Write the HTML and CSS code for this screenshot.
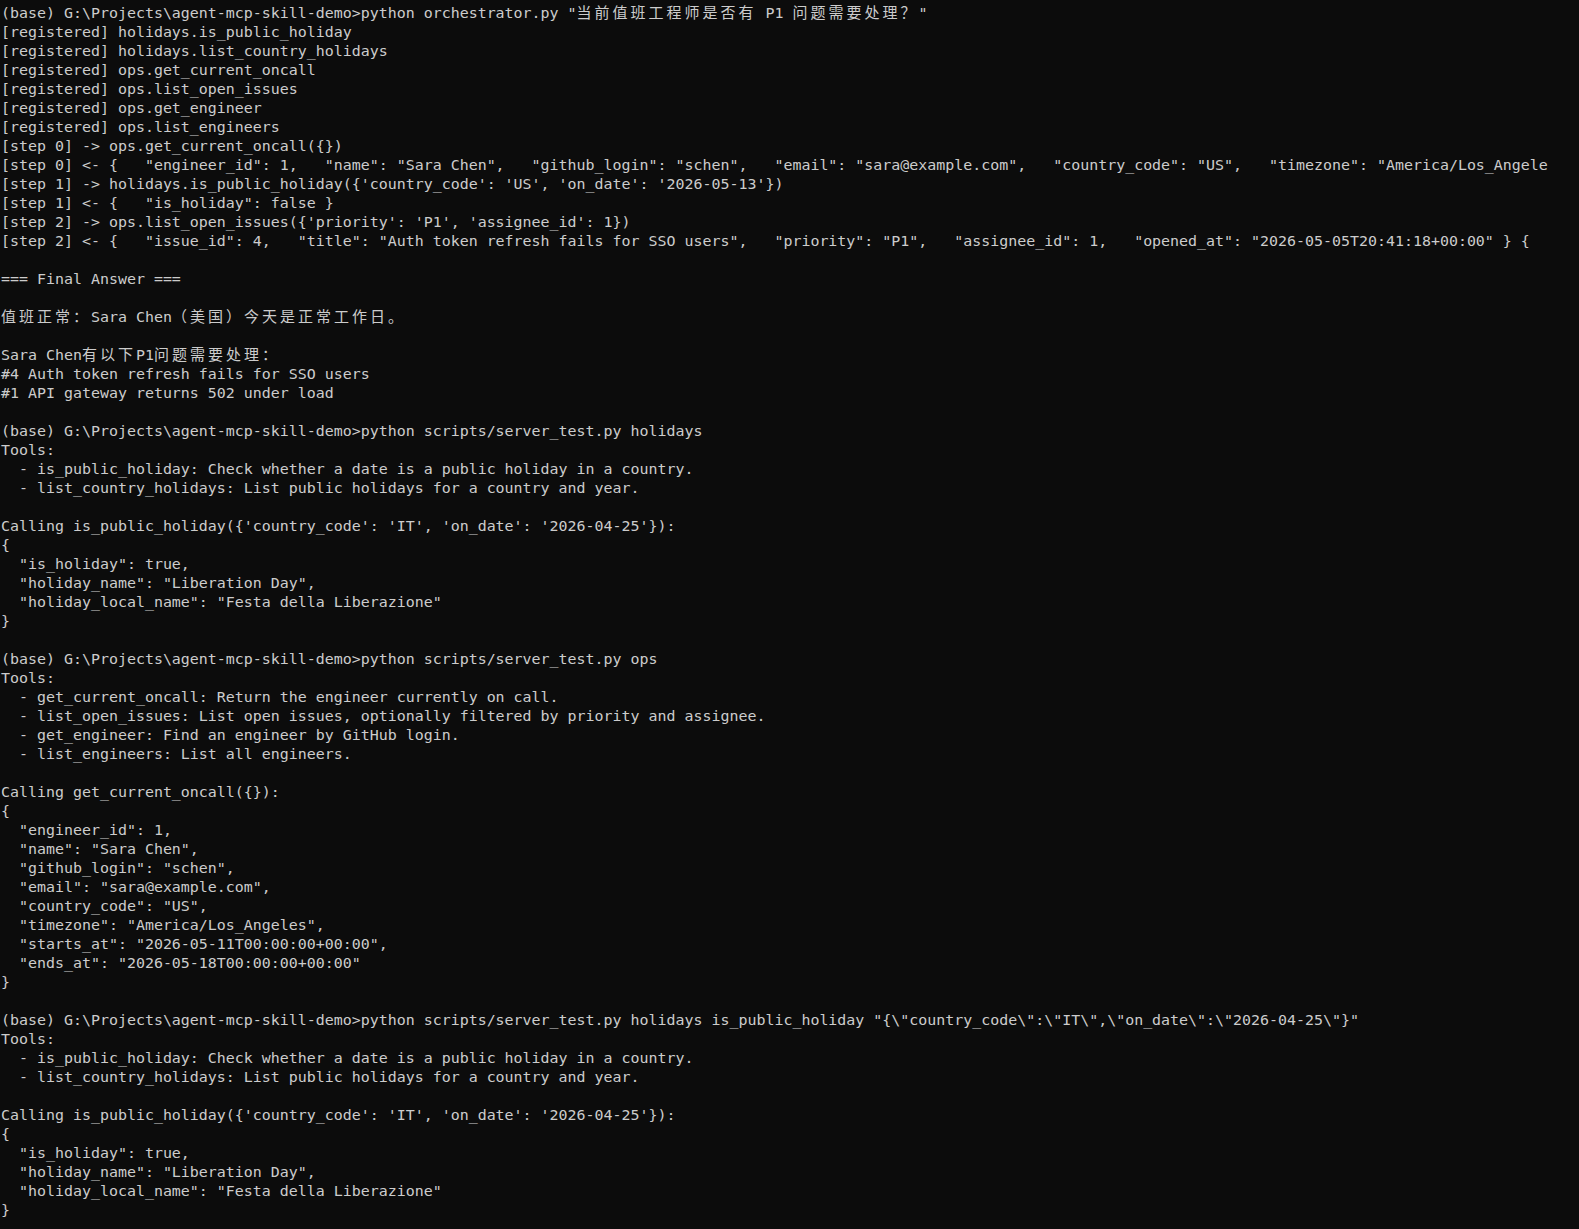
FILE: index.html
```html
<!DOCTYPE html>
<html lang="zh-CN">
<head>
<meta charset="utf-8">
<title>Terminal</title>
<link rel="stylesheet" href="styles.css">
</head>
<body>
<main class="terminal">
<pre class="output">(base) G:\Projects\agent-mcp-skill-demo&gt;python orchestrator.py "<span class="cjk">当前值班工程师是否有</span> P1 <span class="cjk">问题需要处理？</span>"
[registered] holidays.is_public_holiday
[registered] holidays.list_country_holidays
[registered] ops.get_current_oncall
[registered] ops.list_open_issues
[registered] ops.get_engineer
[registered] ops.list_engineers
[step 0] -&gt; ops.get_current_oncall({})
[step 0] &lt;- {   "engineer_id": 1,   "name": "Sara Chen",   "github_login": "schen",   "email": "sara@example.com",   "country_code": "US",   "timezone": "America/Los_Angele
[step 1] -&gt; holidays.is_public_holiday({'country_code': 'US', 'on_date': '2026-05-13'})
[step 1] &lt;- {   "is_holiday": false }
[step 2] -&gt; ops.list_open_issues({'priority': 'P1', 'assignee_id': 1})
[step 2] &lt;- {   "issue_id": 4,   "title": "Auth token refresh fails for SSO users",   "priority": "P1",   "assignee_id": 1,   "opened_at": "2026-05-05T20:41:18+00:00" } {

=== Final Answer ===

<span class="cjk">值班正常：</span>Sara Chen<span class="cjk">（美国）今天是正常工作日。</span>

Sara Chen<span class="cjk">有以下</span>P1<span class="cjk">问题需要处理：</span>
#4 Auth token refresh fails for SSO users
#1 API gateway returns 502 under load

(base) G:\Projects\agent-mcp-skill-demo&gt;python scripts/server_test.py holidays
Tools:
  - is_public_holiday: Check whether a date is a public holiday in a country.
  - list_country_holidays: List public holidays for a country and year.

Calling is_public_holiday({'country_code': 'IT', 'on_date': '2026-04-25'}):
{
  "is_holiday": true,
  "holiday_name": "Liberation Day",
  "holiday_local_name": "Festa della Liberazione"
}

(base) G:\Projects\agent-mcp-skill-demo&gt;python scripts/server_test.py ops
Tools:
  - get_current_oncall: Return the engineer currently on call.
  - list_open_issues: List open issues, optionally filtered by priority and assignee.
  - get_engineer: Find an engineer by GitHub login.
  - list_engineers: List all engineers.

Calling get_current_oncall({}):
{
  "engineer_id": 1,
  "name": "Sara Chen",
  "github_login": "schen",
  "email": "sara@example.com",
  "country_code": "US",
  "timezone": "America/Los_Angeles",
  "starts_at": "2026-05-11T00:00:00+00:00",
  "ends_at": "2026-05-18T00:00:00+00:00"
}

(base) G:\Projects\agent-mcp-skill-demo&gt;python scripts/server_test.py holidays is_public_holiday "{\"country_code\":\"IT\",\"on_date\":\"2026-04-25\"}"
Tools:
  - is_public_holiday: Check whether a date is a public holiday in a country.
  - list_country_holidays: List public holidays for a country and year.

Calling is_public_holiday({'country_code': 'IT', 'on_date': '2026-04-25'}):
{
  "is_holiday": true,
  "holiday_name": "Liberation Day",
  "holiday_local_name": "Festa della Liberazione"
}</pre>
</main>
</body>
</html>
```

FILE: styles.css
```css
html, body {
  margin: 0;
  padding: 0;
  background: #0c0c0c;
  height: 100%;
  overflow: hidden;
}

.terminal {
  background: #0c0c0c;
  color: #cccccc;
  min-height: 100%;
  padding: 4px 0 0 1px;
  box-sizing: border-box;
  overflow: hidden;
}

.output {
  margin: 0;
  font-family: "DejaVu Sans Mono", "Liberation Mono", "Noto Sans CJK SC", monospace;
  font-size: 14.95px;
  line-height: 19px;
  white-space: pre;
}

.cjk {
  font-family: "Noto Sans CJK SC", sans-serif;
  font-size: 15px;
  line-height: 10px;
  letter-spacing: 3px;
}
```
